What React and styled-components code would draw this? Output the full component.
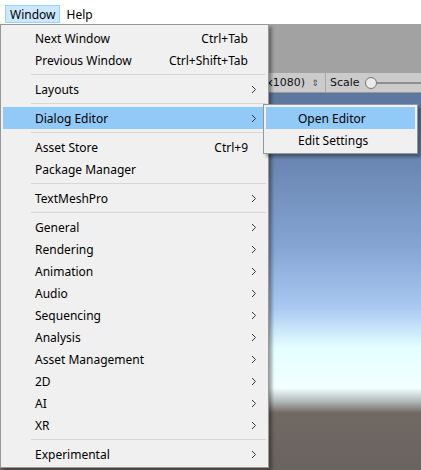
import React from 'react';
import styled, { createGlobalStyle } from 'styled-components';

const GlobalStyle = createGlobalStyle`
    html, body {
        margin: 0;
        padding: 0;
        background: #ffffff;
    }
    #root {
        width: 421px;
        height: 470px;
    }
`;

const Screen = styled.div`
    position: relative;
    width: 421px;
    height: 470px;
    overflow: hidden;
    display: flex;
    flex-direction: column;
    font-family: 'Noto Sans', 'Open Sans', sans-serif;
    font-size: 12px;
    color: #000;
`;

const MenuBar = styled.div`
    height: 24px;
    background: #ffffff;
    display: flex;
    align-items: flex-end;
    padding-left: 5px;
    box-sizing: border-box;
`;

const BarItem = styled.div`
    height: 18px;
    padding: 0 3px 0 4px;
    display: flex;
    align-items: center;
    box-sizing: border-box;
    border: 1px solid ${(props) => (props.active ? '#99d1ff' : 'transparent')};
    background: ${(props) => (props.active ? '#cce8ff' : 'transparent')};
    margin-bottom: 1px;
    margin-right: 2px;
`;

const Editor = styled.div`
    flex: 1;
    display: flex;
    flex-direction: column;
`;

const TabArea = styled.div`
    height: 49px;
    background: #a2a2a2;
`;

const Toolbar = styled.div`
    height: 20px;
    background: #cbcbcb;
    display: flex;
    align-items: center;
    font-family: 'DejaVu Sans', sans-serif;
    font-size: 11px;
    color: #111;
    border-bottom: 1px solid #999;
    box-sizing: border-box;
`;

const Resolution = styled.div`
    width: 305px;
    display: flex;
    justify-content: flex-end;
    white-space: nowrap;
    overflow: hidden;
`;

const Arrows = styled.span`
    width: 20px;
    text-align: center;
    font-size: 9px;
    color: #555;
`;

const ToolDivider = styled.div`
    width: 1px;
    height: 20px;
    background: #a8a8a8;
    margin-right: 4px;
`;

const Slider = styled.div`
    flex: 1;
    display: flex;
    align-items: center;
    margin-left: 5px;
`;

const Thumb = styled.div`
    width: 10px;
    height: 10px;
    border-radius: 50%;
    border: 1px solid #777;
    background: #eaeaea;
    flex-shrink: 0;
`;

const Track = styled.div`
    flex: 1;
    height: 2px;
    background: #8c8c8c;
`;

const SceneView = styled.div`
    flex: 1;
    background: linear-gradient(
        to bottom,
        #5d769e 0px,
        #6783af 60px,
        #86a5d3 155px,
        #a9c9f3 215px,
        #e4ffff 255px,
        #f2ffff 295px,
        #b4bcbb 308px,
        #6f6863 320px,
        #6a6461 100%
    );
`;

const Menu = styled.div`
    position: absolute;
    top: ${(props) => props.top}px;
    left: ${(props) => props.left}px;
    width: ${(props) => props.width}px;
    background: #f0f0f0;
    border: 1px solid #979797;
    padding: 2px;
    box-sizing: border-box;
    box-shadow: 3px 3px 3px rgba(0, 0, 0, 0.35);
`;

const Item = styled.div`
    height: 22px;
    display: flex;
    align-items: center;
    padding-left: 32px;
    padding-right: 9px;
    background: ${(props) => (props.active ? '#91c9f7' : 'transparent')};
    white-space: nowrap;
`;

const Label = styled.span`
    flex: 1;
`;

const Shortcut = styled.span`
    margin-right: 9px;
`;

const Chevron = styled.svg`
    width: 6px;
    height: 9px;
`;

const Separator = styled.div`
    height: 7px;
    display: flex;
    align-items: center;
    padding-left: 28px;

    &::after {
        content: '';
        flex: 1;
        height: 1px;
        background: #d7d7d7;
    }
`;

const Arrow = () => (
    <Chevron viewBox="0 0 6 9">
        <path d="M1 1 L4.5 4.5 L1 8" fill="none" stroke="#333" strokeWidth="1" />
    </Chevron>
);

const menuData = [
    { label: 'Next Window', shortcut: 'Ctrl+Tab' },
    { label: 'Previous Window', shortcut: 'Ctrl+Shift+Tab' },
    'sep',
    { label: 'Layouts', sub: true },
    'sep',
    { label: 'Dialog Editor', sub: true, active: true },
    'sep',
    { label: 'Asset Store', shortcut: 'Ctrl+9' },
    { label: 'Package Manager' },
    'sep',
    { label: 'TextMeshPro', sub: true },
    'sep',
    { label: 'General', sub: true },
    { label: 'Rendering', sub: true },
    { label: 'Animation', sub: true },
    { label: 'Audio', sub: true },
    { label: 'Sequencing', sub: true },
    { label: 'Analysis', sub: true },
    { label: 'Asset Management', sub: true },
    { label: '2D', sub: true },
    { label: 'AI', sub: true },
    { label: 'XR', sub: true },
    'sep',
    { label: 'Experimental', sub: true },
];

function App() {
    return (
        <Screen>
            <GlobalStyle />
            <MenuBar>
                <BarItem active>Window</BarItem>
                <BarItem>Help</BarItem>
            </MenuBar>
            <Editor>
                <TabArea />
                <Toolbar>
                    <Resolution>Full HD (1920x1080)</Resolution>
                    <Arrows>⇕</Arrows>
                    <ToolDivider />
                    <span>Scale</span>
                    <Slider>
                        <Thumb />
                        <Track />
                    </Slider>
                </Toolbar>
                <SceneView />
            </Editor>

            <Menu top={24} left={0} width={269}>
                {menuData.map((item, i) =>
                    item === 'sep' ? (
                        <Separator key={i} />
                    ) : (
                        <Item key={i} active={item.active}>
                            <Label>{item.label}</Label>
                            {item.shortcut && <Shortcut>{item.shortcut}</Shortcut>}
                            {item.sub && <Arrow />}
                        </Item>
                    )
                )}
            </Menu>

            <Menu top={104} left={263} width={155}>
                <Item active>
                    <Label>Open Editor</Label>
                </Item>
                <Item>
                    <Label>Edit Settings</Label>
                </Item>
            </Menu>
        </Screen>
    );
}

export default App;
